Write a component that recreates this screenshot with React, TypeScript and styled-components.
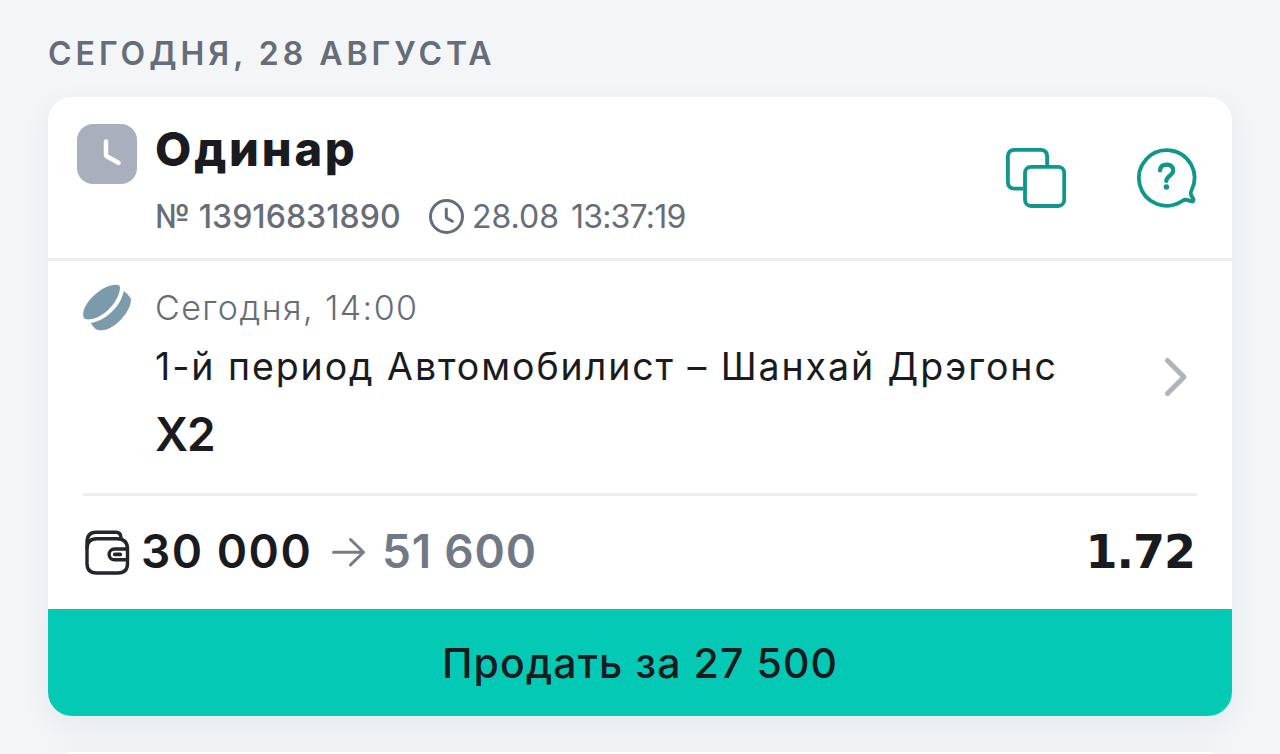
import styled, { createGlobalStyle } from "styled-components";

const GlobalStyle = createGlobalStyle`
  * {
    box-sizing: border-box;
  }
  html, body, #root {
    height: 100%;
  }
  body {
    margin: 0;
    background: #f3f5f7;
    font-family: Inter, "Noto Sans", sans-serif;
    color: #191b21;
    overflow: hidden;
  }
  svg {
    display: block;
    flex: none;
    overflow: visible;
  }
`;

const Page = styled.main`
  height: 100%;
  padding: 30px 48px 0;
  overflow: hidden;
`;

const DayTitle = styled.h2`
  margin: 0 0 19px;
  font-size: 32px;
  line-height: 48px;
  font-weight: 600;
  letter-spacing: 4px;
  text-transform: uppercase;
  white-space: nowrap;
  color: #666d79;
`;

const Card = styled.article`
  height: 619px;
  margin-bottom: 36px;
  border-radius: 24px;
  background: #fff;
  box-shadow: 0 10px 32px rgba(40, 48, 80, 0.06);
  overflow: hidden;
`;

const CardHeader = styled.header`
  display: flex;
  height: 164px;
  padding: 24px 35px 0 29px;
  border-bottom: 3px solid #ecedef;
`;

const StatusBadge = styled.div`
  width: 60px;
  height: 60px;
  margin: 3px 18px 0 0;
  border-radius: 16px;
  background: #a9afbd;
`;

const BetHeading = styled.div`
  flex: 1;
`;

const BetType = styled.h3`
  margin: 0 0 20px;
  font-size: 47px;
  line-height: 56px;
  font-weight: 800;
  letter-spacing: 2.8px;
`;

const Meta = styled.div`
  display: flex;
  align-items: center;
  height: 40px;
  line-height: 40px;
  color: #666d79;
  white-space: nowrap;
`;

const BetNumber = styled.span`
  width: 274px;
  font-size: 32px;
  font-weight: 500;
  letter-spacing: 0.05px;
`;

const BetDate = styled.time`
  display: flex;
  gap: 12px;
  margin-left: 7px;
  font-size: 32px;
  font-weight: 400;
`;

const Time = styled.span`
  letter-spacing: -0.8px;
`;

const Actions = styled.div`
  display: flex;
  gap: 71px;
  padding-top: 27px;
`;

const IconButton = styled.button`
  width: 60px;
  height: 60px;
  padding: 0;
  border: 0;
  background: none;
  color: #10968a;
`;

const Event = styled.section`
  display: flex;
  height: 235px;
  margin: 0 35px;
  padding-top: 23px;
  border-bottom: 3px solid #ecedef;
`;

const EventInfo = styled.div`
  flex: 1;
  padding: 2px 0 0 24px;
  white-space: nowrap;
`;

const EventTime = styled.div`
  margin-bottom: 11px;
  font-size: 34px;
  line-height: 44px;
  font-weight: 300;
  letter-spacing: 1.45px;
  color: #666d79;
`;

const EventName = styled.div`
  margin-bottom: 11px;
  font-size: 37.5px;
  line-height: 52px;
  font-weight: 400;
  letter-spacing: 1.93px;
`;

const Outcome = styled.div`
  font-size: 46px;
  line-height: 60px;
  font-weight: 600;
  letter-spacing: -1px;
`;

const ChevronBox = styled.div`
  padding: 72px 9px 0 0;
`;

const Totals = styled.div`
  display: flex;
  align-items: center;
  height: 113px;
  padding: 0 37px;
  white-space: nowrap;
`;

const Amount = styled.span<{ $muted?: boolean }>`
  margin-top: -4px;
  font-size: 46px;
  line-height: 60px;
  font-weight: 600;
  letter-spacing: ${({ $muted }) => ($muted ? "0.8px" : "1.5px")};
  color: ${({ $muted }) => ($muted ? "#727986" : "#191b21")};
`;

const StakeAmount = styled(Amount)`
  width: 191px;
  margin-left: 11px;
`;

const WinAmount = styled(Amount)`
  flex: 1;
  margin-left: 16px;
`;

const Odds = styled.span`
  margin-top: -2px;
  font-family: "DejaVu Sans", sans-serif;
  font-size: 46px;
  line-height: 60px;
  font-weight: 700;
  letter-spacing: -1px;
`;

const SellButton = styled.button`
  display: block;
  width: 100%;
  height: 107px;
  padding: 1px 0 0;
  border: 0;
  background: #04c9b5;
  font-family: inherit;
  font-size: 41px;
  line-height: 106px;
  font-weight: 500;
  letter-spacing: 1.1px;
  color: #191b21;
`;

const BadgeClock = () => (
  <svg width="60" height="60" fill="none" stroke="#fff" strokeWidth="4.5" strokeLinecap="round" strokeLinejoin="round">
    <path d="M29 17.500v13.200q0 1.200 1 1.800l11.500 6.300" />
  </svg>
);

const ClockIcon = () => (
  <svg width="36" height="36" fill="none" stroke="#666d79" strokeWidth="3" strokeLinecap="round" strokeLinejoin="round">
    <circle cx="17.500" cy="17.500" r="16" />
    <path d="M17.300 10v8q0 1 1 1.500l5 2.800" />
  </svg>
);

const CopyIcon = () => (
  <svg width="60" height="60" fill="none" stroke="currentColor" strokeWidth="3.8">
    <path d="M17 40.600H8.500q-6.600 0-6.600-6.600V8.500q0-6.600 6.600-6.600H34.500q6.600 0 6.600 6.600V17" />
    <rect x="19" y="18.800" width="39.200" height="39.200" rx="6" />
  </svg>
);

const HelpIcon = () => (
  <svg width="60" height="60" fill="none" stroke="currentColor" strokeWidth="3.8" strokeLinecap="round" strokeLinejoin="round">
    <path d="M54.500 42.500A27.800 27.800 0 1 0 45.500 52.800q2.200-1.500 4.500-.9l4.500 1.500q2.300.5 2-1.900l-2.600-5q-.8-1.800.6-4z" />
    <path d="M23 22.500q.3-5.800 6.700-5.800 6.500.2 6.500 5.900 0 2.500-3.300 5-3.400 2.600-3.700 5.300" strokeWidth="4.200" />
    <circle cx="29.400" cy="39" r="2.800" fill="currentColor" stroke="none" />
  </svg>
);

const PuckIcon = () => (
  <svg width="48" height="47" fill="#7b9bab">
    <path d="M.2 31C-.5 19 19 .5 33.500.8q3.600.1 3.500 3.200C36.500 16 22 33.500 7.500 35.300 1.500 36 .3 34 .2 31z" />
    <path d="M40.800 7q4.600 3 7 7.500C49.500 25 33 45.500 19 46.300q-4 .3-6.300-1.300-3-2.300-5-6C23 36.500 37.500 23 40.800 7z" />
  </svg>
);

const ChevronIcon = () => (
  <svg width="24" height="42" fill="none" stroke="#b0b3bd" strokeWidth="5" strokeLinecap="round" strokeLinejoin="round">
    <path d="M3.500 4.500 20 21 3.500 37.500" />
  </svg>
);

const WalletIcon = () => (
  <svg width="45" height="45" fill="none" stroke="#24262d" strokeWidth="3.4" strokeLinecap="round">
    <path d="M2 18v15.500Q2 43 11.500 43h21.500q9.500 0 9.500-9.500V19Q42.500 8.700 32 8.700H11.500Q2.500 8.700 2 18z" />
    <path d="M2 18v-5.500Q2 2.300 11 2.300h20q4.700 0 5 5.200v1.500" />
    <path d="M42.500 19H29.500a5.400 5.400 0 0 0 0 10.800h13" />
    <path d="M29.800 24.400h5.400" strokeWidth="3.800" />
  </svg>
);

const ArrowIcon = () => (
  <svg width="34" height="30" fill="none" stroke="#777d82" strokeWidth="3" strokeLinecap="round" strokeLinejoin="round">
    <path d="M1.500 14.200h30M18.500 1.500l13 12.700-13 12.700" />
  </svg>
);

const App = () => {
  return (
    <>
      <GlobalStyle />
      <Page>
        <DayTitle>Сегодня, 28 августа</DayTitle>
        <Card>
          <CardHeader>
            <StatusBadge>
              <BadgeClock />
            </StatusBadge>
            <BetHeading>
              <BetType>Одинар</BetType>
              <Meta>
                <BetNumber>№ 13916831890</BetNumber>
                <ClockIcon />
                <BetDate>
                  <span>28.08</span>
                  <Time>13:37:19</Time>
                </BetDate>
              </Meta>
            </BetHeading>
            <Actions>
              <IconButton>
                <CopyIcon />
              </IconButton>
              <IconButton>
                <HelpIcon />
              </IconButton>
            </Actions>
          </CardHeader>
          <Event>
            <PuckIcon />
            <EventInfo>
              <EventTime>Сегодня, 14:00</EventTime>
              <EventName>1-й период Автомобилист – Шанхай Дрэгонс</EventName>
              <Outcome>Х2</Outcome>
            </EventInfo>
            <ChevronBox>
              <ChevronIcon />
            </ChevronBox>
          </Event>
          <Totals>
            <WalletIcon />
            <StakeAmount>30 000</StakeAmount>
            <ArrowIcon />
            <WinAmount $muted>51 600</WinAmount>
            <Odds>1.72</Odds>
          </Totals>
          <SellButton>Продать за 27 500</SellButton>
        </Card>
        <Card />
      </Page>
    </>
  );
};

export default App;
